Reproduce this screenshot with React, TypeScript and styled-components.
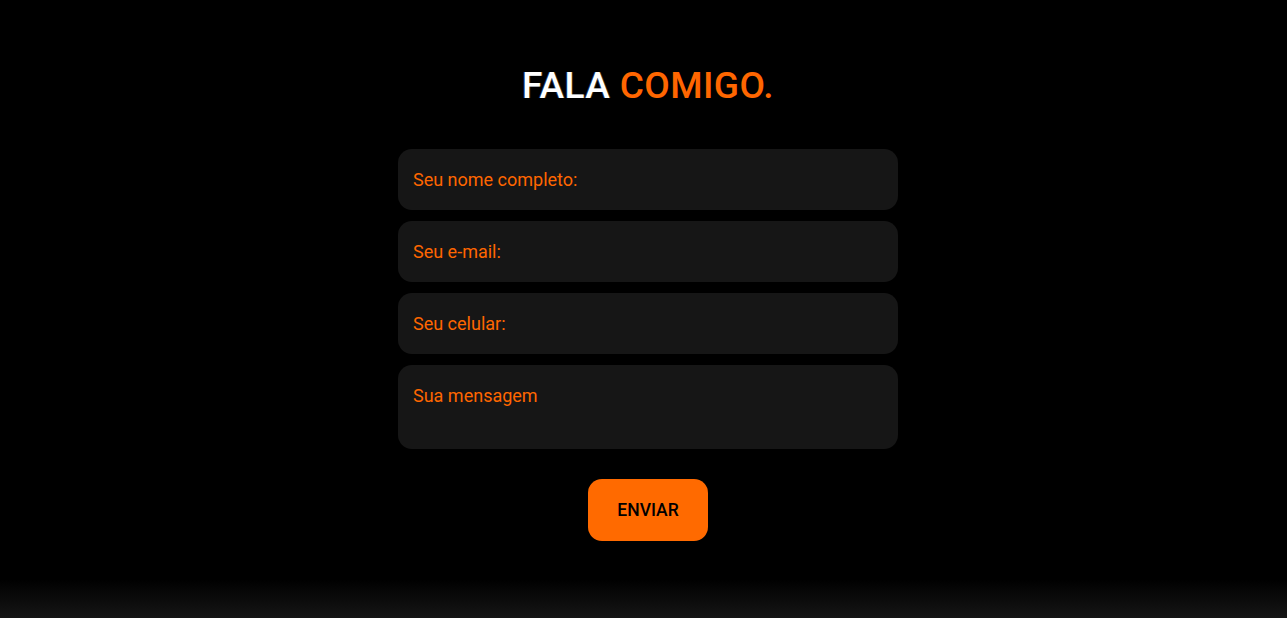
import React from "react";
import styled, { createGlobalStyle } from "styled-components";

const Global = createGlobalStyle`
  html, body { margin: 0; padding: 0; background: #000; }
  body { font-family: Roboto, "Liberation Sans", sans-serif; }
  * { box-sizing: border-box; }
`;

const Page = styled.div`
  min-height: 618px;
  display: flex;
  flex-direction: column;
  background: #000;
`;

const Section = styled.section`
  display: flex;
  flex-direction: column;
  align-items: center;
  padding: 65px 0 38px 9px;
`;

const Title = styled.h2`
  margin: 0 0 42px;
  font-size: 37px;
  line-height: 42px;
  font-weight: 500;
  color: #fff;
  letter-spacing: 0.4px;
  text-shadow: -1px 0 0 rgba(80, 140, 255, 0.35), 1px 0 0 rgba(255, 230, 120, 0.2);
`;

const Accent = styled.span`
  color: #ff6600;
  text-shadow: none;
`;

const Form = styled.form`
  width: 500px;
  display: flex;
  flex-direction: column;
  align-items: center;
  gap: 11px;
`;

const fieldCss = `
  width: 100%;
  border: none;
  outline: none;
  background: #161616;
  border-radius: 14px;
  color: #ff6600;
  font-family: Roboto, "Liberation Sans", sans-serif;
  font-size: 18px;
  line-height: 21px;
  padding: 20px 15px;
  &::placeholder { color: #ff6600; opacity: 1; }
`;

const Input = styled.input`
  ${fieldCss}
  height: 61px;
`;

const TextArea = styled.textarea`
  ${fieldCss}
  height: 84px;
  padding-top: 20px;
  resize: none;
  display: block;
`;

const Button = styled.button`
  margin-top: 19px;
  width: 120px;
  height: 62px;
  border: none;
  border-radius: 14px;
  background: #ff6a00;
  color: #000;
  font-family: Roboto, "Liberation Sans", sans-serif;
  font-size: 17.5px;
  font-weight: 500;
  cursor: pointer;
`;

const Fade = styled.div`
  flex: 1;
  min-height: 40px;
  background: linear-gradient(to bottom, #000 0%, #161616 100%);
`;

export default function App() {
  return (
    <Page>
      <Global />
      <Section>
        <Title>
          FALA <Accent>COMIGO.</Accent>
        </Title>
        <Form onSubmit={(e) => e.preventDefault()}>
          <Input placeholder="Seu nome completo:" />
          <Input placeholder="Seu e-mail:" />
          <Input placeholder="Seu celular:" />
          <TextArea placeholder="Sua mensagem" />
          <Button type="submit">ENVIAR</Button>
        </Form>
      </Section>
      <Fade />
    </Page>
  );
}
